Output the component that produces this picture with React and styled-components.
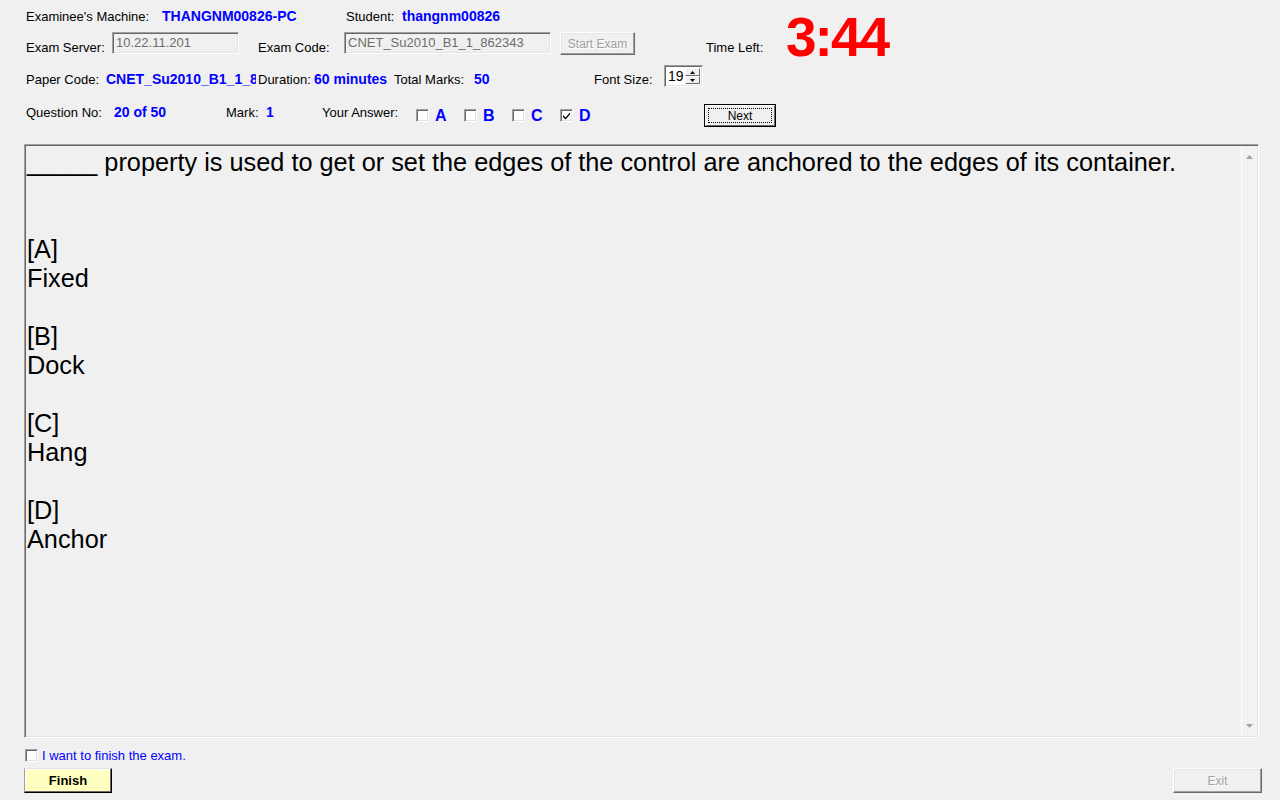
import React from "react";
import styled, { createGlobalStyle } from "styled-components";

const GlobalStyle = createGlobalStyle`
  html, body {
    margin: 0;
    padding: 0;
    background: #f0f0f0;
  }
  body {
    font-family: "Liberation Sans", Arial, sans-serif;
    color: #000;
  }
`;

const Page = styled.div`
  width: 1280px;
  height: 800px;
  background: #f0f0f0;
  overflow: hidden;
  display: flex;
  flex-direction: column;
`;

const Header = styled.div`
  padding-left: 26px;
  display: flex;
  flex-direction: column;
`;

const Row = styled.div`
  display: flex;
  align-items: ${(p) => p.align || "center"};
  height: ${(p) => p.h}px;
  margin-top: ${(p) => p.top || 0}px;
`;

const Label = styled.div`
  width: ${(p) => (p.w ? `${p.w}px` : "auto")};
  flex-shrink: 0;
  font-size: 13px;
  line-height: 15px;
  white-space: nowrap;
  margin-top: ${(p) => p.mt || 0}px;
  align-self: ${(p) => p.self || "auto"};
`;

const Value = styled.div`
  width: ${(p) => (p.w ? `${p.w}px` : "auto")};
  flex-shrink: 0;
  overflow: hidden;
  font-size: 14px;
  line-height: 15px;
  font-weight: bold;
  color: #0000ff;
  white-space: nowrap;
  margin-top: ${(p) => p.mt || 0}px;
  align-self: ${(p) => p.self || "auto"};
`;

const Sunken = styled.div`
  box-sizing: border-box;
  border-top: 1px solid #a0a0a0;
  border-left: 1px solid #a0a0a0;
  border-right: 1px solid #fff;
  border-bottom: 1px solid #fff;
  box-shadow: inset 1px 1px 0 #696969, inset -1px -1px 0 #e3e3e3;
`;

const TextBox = styled(Sunken)`
  width: ${(p) => p.w}px;
  height: 22px;
  flex-shrink: 0;
  align-self: flex-start;
  margin-right: ${(p) => p.mr || 0}px;
  padding: 2px 0 0 3px;
  font-size: 13px;
  line-height: 16px;
  color: #6d6d6d;
  white-space: nowrap;
  overflow: hidden;
`;

const Button = styled.div`
  box-sizing: border-box;
  width: ${(p) => p.w}px;
  height: ${(p) => p.h || 23}px;
  flex-shrink: 0;
  display: flex;
  align-items: center;
  justify-content: center;
  background: ${(p) => p.bg || "#f0f0f0"};
  border-top: 1px solid #fff;
  border-left: 1px solid #fff;
  border-right: 1px solid #696969;
  border-bottom: 1px solid #696969;
  box-shadow: inset -1px -1px 0 #a0a0a0, inset 1px 1px 0 #e3e3e3;
  font-size: ${(p) => p.fs || 12}px;
  font-weight: ${(p) => (p.bold ? "bold" : "normal")};
  color: ${(p) => (p.disabled ? "#a0a0a0" : "#000")};
  text-shadow: ${(p) => (p.disabled ? "1px 1px 0 #fff" : "none")};
  align-self: ${(p) => p.self || "auto"};
  margin-top: ${(p) => p.mt || 0}px;
`;

const DefaultButton = styled.div`
  box-sizing: border-box;
  width: ${(p) => p.w}px;
  height: 23px;
  flex-shrink: 0;
  border: 1px solid #000;
  margin-top: ${(p) => p.mt || 0}px;
`;

const DefaultFace = styled.div`
  box-sizing: border-box;
  height: 100%;
  background: #f0f0f0;
  border-top: 1px solid #fff;
  border-left: 1px solid #fff;
  border-right: 1px solid #696969;
  border-bottom: 1px solid #696969;
  padding: 2px;
`;

const FocusRect = styled.div`
  box-sizing: border-box;
  height: 100%;
  border: 1px dotted #000;
  display: flex;
  align-items: center;
  justify-content: center;
  font-size: 12px;
`;

const Spacer = styled.div`
  width: ${(p) => p.w}px;
  flex-shrink: 0;
`;

const Time = styled.div`
  align-self: flex-end;
  margin-bottom: -10px;
  font-size: 55px;
  line-height: 55px;
  font-weight: bold;
  letter-spacing: -2px;
  color: #ff0000;
`;

const SpinBox = styled(Sunken)`
  width: 39px;
  height: 22px;
  flex-shrink: 0;
  align-self: flex-end;
  background: #fff;
  display: flex;
  padding: 2px;
`;

const SpinText = styled.div`
  flex: 1;
  font-size: 14px;
  line-height: 16px;
  padding-left: 1px;
  overflow: hidden;
`;

const SpinButtons = styled.div`
  width: 15px;
  display: flex;
  flex-direction: column;
`;

const SpinBtn = styled.div`
  flex: 1;
  box-sizing: border-box;
  background: #f0f0f0;
  border-top: 1px solid #fff;
  border-left: 1px solid #fff;
  border-right: 1px solid #696969;
  border-bottom: 1px solid #696969;
  display: flex;
  align-items: center;
  justify-content: center;
`;

const Options = styled.div`
  width: 288px;
  flex-shrink: 0;
  display: flex;
  margin-top: 6px;
`;

const Option = styled.div`
  width: 48px;
  display: flex;
  align-items: center;
  height: 13px;
  gap: 6px;
`;

const OptionLetter = styled.span`
  font-size: 16px;
  line-height: 13px;
  font-weight: bold;
  color: #0000ff;
`;

const Box = styled(Sunken)`
  width: 13px;
  height: 13px;
  flex-shrink: 0;
  background: #fff;
  display: flex;
  align-items: center;
  justify-content: center;
`;

const Panel = styled(Sunken)`
  margin: 16px 0 0 24px;
  width: 1235px;
  height: 594px;
  display: flex;
  padding: 2px 1px 1px 2px;
`;

const QuestionText = styled.div`
  flex: 1;
  padding: 1px 0 0 0;
  font-size: 25.3px;
  line-height: 29px;
  white-space: pre-line;
  color: #000;
`;

const ScrollBar = styled.div`
  width: 15px;
  border-left: 1px solid #fff;
  background: #f2f2f2;
  display: flex;
  flex-direction: column;
  justify-content: space-between;
  align-items: center;
  padding: 8px 0 8px;
`;

const Footer = styled.div`
  display: flex;
  flex-direction: column;
  padding: 11px 18px 0 24px;
`;

const FinishCheck = styled.div`
  display: flex;
  align-items: center;
  height: 13px;
  gap: 4px;
  padding-left: 1px;
`;

const FinishText = styled.span`
  font-size: 13px;
  line-height: 13px;
  color: #0000ff;
`;

const ButtonRow = styled.div`
  display: flex;
  justify-content: space-between;
  margin-top: 6px;
`;

const FinishButton = styled(Button)`
  border-top-color: #e3e3e3;
  border-left-color: #a0a0a0;
  border-right-color: #000;
  border-bottom-color: #000;
  box-shadow: inset -1px -1px 0 #696969, inset 1px 1px 0 #fff;
`;

const ScrollArrow = ({ down }) => (
  <svg width="7" height="4" viewBox="0 0 7 4">
    <path d={down ? "M0 0 H7 L3.5 4 Z" : "M3.5 0 L7 4 H0 Z"} fill="#a3a3a3" />
  </svg>
);

const Check = () => (
  <svg width="9" height="9" viewBox="0 0 9 9">
    <path d="M1 4 L3.5 6.5 L8 1.5 L8 3.5 L3.5 8.5 L1 6 Z" fill="#000" />
  </svg>
);

const CheckBox = ({ checked }) => <Box>{checked && <Check />}</Box>;

const question = `_____ property is used to get or set the edges of the control are anchored to the edges of its container.


[A]
Fixed

[B]
Dock

[C]
Hang

[D]
Anchor`;

export default function App() {
  return (
    <Page>
      <GlobalStyle />
      <Header>
        <Row h={16} top={8}>
          <Label w={136}>Examinee's Machine:</Label>
          <Value w={184}>THANGNM00826-PC</Value>
          <Label w={56}>Student:</Label>
          <Value>thangnm00826</Value>
        </Row>

        <Row h={23} top={8}>
          <Label w={86} self="flex-end">Exam Server:</Label>
          <TextBox w={127} mr={19}>10.22.11.201</TextBox>
          <Label w={86} self="flex-end">Exam Code:</Label>
          <TextBox w={207} mr={9}>CNET_Su2010_B1_1_862343</TextBox>
          <Button w={75} disabled self="flex-start">Start Exam</Button>
          <Spacer w={71} />
          <Label w={80} self="flex-end">Time Left:</Label>
          <Time>3:44</Time>
        </Row>

        <Row h={23} top={9} align="flex-end">
          <Label w={80} mt={0}>Paper Code:</Label>
          <Value w={150}>CNET_Su2010_B1_1_862343</Value>
          <Spacer w={2} />
          <Label w={56}>Duration:</Label>
          <Value w={80}>60 minutes</Value>
          <Label w={80}>Total Marks:</Label>
          <Value w={120}>50</Value>
          <Label w={70}>Font Size:</Label>
          <SpinBox>
            <SpinText>19</SpinText>
            <SpinButtons>
              <SpinBtn>
                <svg width="5" height="3" viewBox="0 0 5 3"><path d="M2.5 0 L5 3 H0 Z" fill="#000" /></svg>
              </SpinBtn>
              <SpinBtn>
                <svg width="5" height="3" viewBox="0 0 5 3"><path d="M0 0 H5 L2.5 3 Z" fill="#000" /></svg>
              </SpinBtn>
            </SpinButtons>
          </SpinBox>
        </Row>

        <Row h={25} top={16} align="flex-start">
          <Label w={88} mt={2}>Question No:</Label>
          <Value w={112} mt={2}>20 of 50</Value>
          <Label w={40} mt={2}>Mark:</Label>
          <Value w={56} mt={2}>1</Value>
          <Label w={94} mt={2}>Your Answer:</Label>
          <Options>
            {["A", "B", "C", "D"].map((k) => (
              <Option key={k}>
                <CheckBox checked={k === "D"} />
                <OptionLetter>{k}</OptionLetter>
              </Option>
            ))}
          </Options>
          <DefaultButton w={72} mt={1}>
            <DefaultFace>
              <FocusRect>Next</FocusRect>
            </DefaultFace>
          </DefaultButton>
        </Row>
      </Header>

      <Panel>
        <QuestionText>{question}</QuestionText>
        <ScrollBar>
          <ScrollArrow />
          <ScrollArrow down />
        </ScrollBar>
      </Panel>

      <Footer>
        <FinishCheck>
          <CheckBox />
          <FinishText>I want to finish the exam.</FinishText>
        </FinishCheck>
        <ButtonRow>
          <FinishButton w={88} h={25} bg="#ffffc0" fs={13} bold>
            Finish
          </FinishButton>
          <Button w={89} h={25} disabled>
            Exit
          </Button>
        </ButtonRow>
      </Footer>
    </Page>
  );
}
